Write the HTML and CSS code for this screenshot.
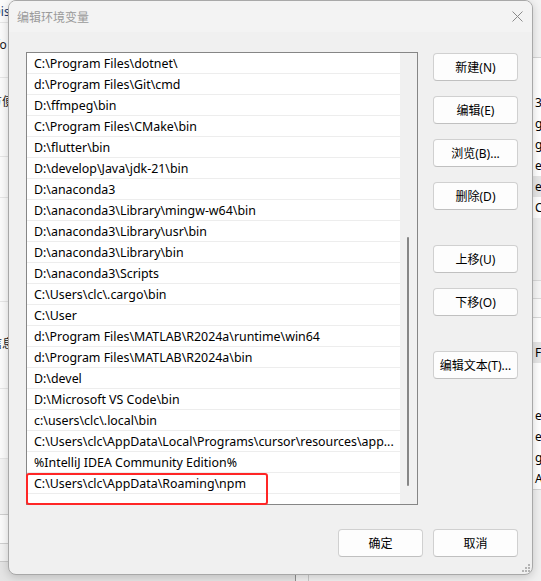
FILE: index.html
```html
<!DOCTYPE html>
<html lang="zh-CN">
<head>
<meta charset="utf-8">
<title>编辑环境变量</title>
<link rel="stylesheet" href="styles.css">
</head>
<body>
  <!-- windows behind the dialog -->
  <div class="win win-left">
    <div class="lrow lrow-a"><span>Dist</span></div>
    <div class="lrow lrow-b"><span>Info f</span></div>
    <div class="lrow lrow-c"><span>方便</span></div>
    <div class="lrow lrow-d"></div>
    <div class="lrow lrow-e"></div>
    <div class="lrow lrow-f"><span>信息</span></div>
    <div class="lrow lrow-g"></div>
    <div class="lfoot"><span class="lbtn"></span></div>
  </div>

  <div class="win win-parent">
    <div class="pane">
      <div class="phead"></div>
      <div class="prows">
        <div class="prow prow-gap"></div>
        <div class="prow"><span class="pval">39</span></div>
        <div class="prow"><span class="pval">g</span></div>
        <div class="prow"><span class="pval">g</span></div>
        <div class="prow"><span class="pval">ers</span></div>
        <div class="prow prow-sel"><span class="pval">ers</span></div>
        <div class="prow"><span class="pval">Ch</span></div>
      </div>
      <div class="pmid">
        <div class="pband pband-a"></div>
        <div class="pband pband-b"></div>
        <div class="pband pband-c"></div>
      </div>
      <div class="prows prows-2">
        <div class="prow prow-gap2"></div>
        <div class="prow prow-sel"><span class="pval">Fp</span></div>
        <div class="prow"></div>
        <div class="prow"></div>
        <div class="prow"><span class="pval">e</span></div>
        <div class="prow"><span class="pval">ers</span></div>
        <div class="prow"><span class="pval">g</span></div>
        <div class="prow"><span class="pval">A_</span></div>
      </div>
    </div>
  </div>

  <!-- the dialog -->
  <div class="dialog">
    <header class="titlebar">
      <span class="title">编辑环境变量</span>
      <span class="close">
        <svg width="11" height="11" viewBox="0 0 11 11"><path d="M0.5 0.5 L10.5 10.5 M10.5 0.5 L0.5 10.5" stroke="#8a8a8a" stroke-width="1" fill="none"/></svg>
      </span>
    </header>

    <div class="content">
      <div class="main">
        <div class="listbox">
          <ul class="paths">
            <li>C:\Program Files\dotnet\</li>
            <li>d:\Program Files\Git\cmd</li>
            <li>D:\ffmpeg\bin</li>
            <li>C:\Program Files\CMake\bin</li>
            <li>D:\flutter\bin</li>
            <li>D:\develop\Java\jdk-21\bin</li>
            <li>D:\anaconda3</li>
            <li>D:\anaconda3\Library\mingw-w64\bin</li>
            <li>D:\anaconda3\Library\usr\bin</li>
            <li>D:\anaconda3\Library\bin</li>
            <li>D:\anaconda3\Scripts</li>
            <li>C:\Users\clc\.cargo\bin</li>
            <li>C:\User</li>
            <li>d:\Program Files\MATLAB\R2024a\runtime\win64</li>
            <li>d:\Program Files\MATLAB\R2024a\bin</li>
            <li>D:\devel</li>
            <li>D:\Microsoft VS Code\bin</li>
            <li>c:\users\clc\.local\bin</li>
            <li>C:\Users\clc\AppData\Local\Programs\cursor\resources\app...</li>
            <li>%IntelliJ IDEA Community Edition%</li>
            <li>C:\Users\clc\AppData\Roaming\npm</li>
            <li></li>
          </ul>
          <div class="vscroll"><div class="thumb"></div></div>
        </div>

        <div class="actions">
          <div class="group">
            <button class="btn">新建(N)</button>
            <button class="btn">编辑(E)</button>
            <button class="btn">浏览(B)...</button>
            <button class="btn">删除(D)</button>
          </div>
          <div class="group">
            <button class="btn">上移(U)</button>
            <button class="btn">下移(O)</button>
          </div>
          <div class="group">
            <button class="btn">编辑文本(T)...</button>
          </div>
        </div>
      </div>

      <footer class="footer">
        <button class="btn">确定</button>
        <button class="btn">取消</button>
      </footer>
    </div>

    <span class="grip">
      <svg width="8" height="8" viewBox="0 0 8 8" fill="#b4b4b4">
        <rect x="6" y="0" width="2" height="2"/>
        <rect x="3" y="3" width="2" height="2"/><rect x="6" y="3" width="2" height="2"/>
        <rect x="0" y="6" width="2" height="2"/><rect x="3" y="6" width="2" height="2"/><rect x="6" y="6" width="2" height="2"/>
      </svg>
    </span>
  </div>

  <!-- highlight drawn around the new entry -->
  <div class="callout"></div>
</body>
</html>
```

FILE: styles.css
```css
* {
  box-sizing: border-box;
}

html,
body {
  margin: 0;
  padding: 0;
}

body {
  position: relative;
  width: 541px;
  height: 581px;
  overflow: hidden;
  background: #e4e4e4;
  font-family: "Noto Sans", "Noto Sans CJK SC", sans-serif;
  font-size: 12px;
  color: #000;
}

/* ---------- background windows ---------- */
.win {
  position: absolute;
  top: 0;
}

.win-left {
  left: -300px;
  width: 314px;
  height: 562px;
  display: flex;
  flex-direction: column;
  background: #fbfbfb;
  border-bottom: 1px solid #c9c9c9;
}

.lrow {
  display: flex;
  justify-content: flex-end;
  align-items: center;
  white-space: nowrap;
  border-bottom: 1px solid #e6e6e6;
  font-size: 12px;
  color: #1a1a1a;
}

.lrow-a { height: 23px; color: #1b3b6f; }
.lrow-b { height: 55px; align-items: flex-start; padding-top: 13px; }
.lrow-c { height: 79px; align-items: flex-start; padding-top: 14px; }
.lrow-d { height: 41px; }
.lrow-e { height: 104px; }
.lrow-f { height: 87px; align-items: flex-start; padding-top: 32px; }
.lrow-g { height: 70px; }

.lfoot {
  flex: 1;
  background: #f3f3f3;
  display: flex;
  justify-content: flex-end;
  padding-top: 55px;
  padding-right: 2px;
}

.lbtn {
  width: 40px;
  height: 30px;
  border: 1px solid #cfcfcf;
  border-radius: 4px;
  background: #fbfbfb;
}

.win-parent {
  left: 295px;
  width: 260px;
  height: 581px;
  background: #f0f0f0;
  border-left: 1px solid #8f8f8f;
  padding-left: 12px;
}

.pane {
  height: 100%;
  display: flex;
  flex-direction: column;
  border-left: 1px solid #c8c8c8;
}

.phead {
  height: 58px;
  background: #f3f3f3;
  border-bottom: 1px solid #d6d6d6;
}

.prows {
  background: #fff;
  display: flex;
  flex-direction: column;
}

.prows-2 {
  border-bottom: 1px solid #d6d6d6;
}

.prow {
  height: 21px;
  display: flex;
  align-items: center;
  padding-left: 226px;
  white-space: nowrap;
}

.prow-gap { height: 34px; }
.prow-gap2 { height: 24px; }
.prow-sel { background: #e6e6e6; }

.pband { border-bottom: 1px solid #d9d9d9; }
.pband-a { height: 63px; background: #f0f0f0; }
.pband-b { height: 18px; background: #f6f6f6; }
.pband-c { height: 19px; background: #fbfbfb; }

/* ---------- dialog ---------- */
.dialog {
  position: absolute;
  left: 8px;
  top: 0;
  width: 525px;
  height: 575px;
  display: flex;
  flex-direction: column;
  background: #f0f0f0;
  border: 1px solid #a8a8a8;
  border-radius: 8px;
  overflow: hidden;
  box-shadow: 0 2px 10px rgba(0, 0, 0, 0.18);
}

.titlebar {
  height: 31px;
  flex: none;
  display: flex;
  align-items: center;
  justify-content: space-between;
  padding: 0 7px 0 8px;
  background: #f3f3f3;
}

.title {
  color: #9a9a9a;
  font-size: 12px;
}

.close {
  width: 16px;
  height: 16px;
  display: flex;
  align-items: center;
  justify-content: center;
}

.content {
  flex: 1;
  display: flex;
  flex-direction: column;
  padding: 20px 14px 17px 17px;
}

.main {
  display: flex;
  gap: 15px;
}

.listbox {
  width: 392px;
  height: 453px;
  display: flex;
  border: 1px solid #868686;
  background: #fff;
}

.paths {
  flex: 1;
  margin: 0;
  padding: 0;
  list-style: none;
  overflow: hidden;
}

.paths li {
  height: 21px;
  line-height: 18px;
  padding: 2px 0 0 7px;
  font-size: 12.4px;
  border-bottom: 1px solid #ededed;
  white-space: nowrap;
  overflow: hidden;
}

.vscroll {
  width: 17px;
  flex: none;
  background: #f0f0f0;
  padding: 184px 0 0 7px;
}

.thumb {
  width: 2px;
  height: 249px;
  background: #868686;
  border-radius: 1px;
}

.actions {
  width: 85px;
  display: flex;
  flex-direction: column;
  gap: 35px;
  padding-top: 1px;
}

.group {
  display: flex;
  flex-direction: column;
  gap: 15px;
}

.btn {
  width: 85px;
  height: 28px;
  padding: 0;
  font-family: "Noto Sans", "Noto Sans CJK SC", sans-serif;
  font-size: 12px;
  color: #000;
  background: #fdfdfd;
  border: 1px solid #d0d0d0;
  border-bottom-color: #c0c0c0;
  border-radius: 4px;
}

.footer {
  margin-top: 24px;
  display: flex;
  justify-content: flex-end;
  gap: 10px;
}

.grip {
  position: absolute;
  right: 2px;
  bottom: 2px;
  line-height: 0;
}

/* red frame around the added path */
.callout {
  position: absolute;
  left: 26px;
  top: 473px;
  width: 242px;
  height: 32px;
  border: 2px solid #ff2626;
  border-radius: 3px;
}
```
